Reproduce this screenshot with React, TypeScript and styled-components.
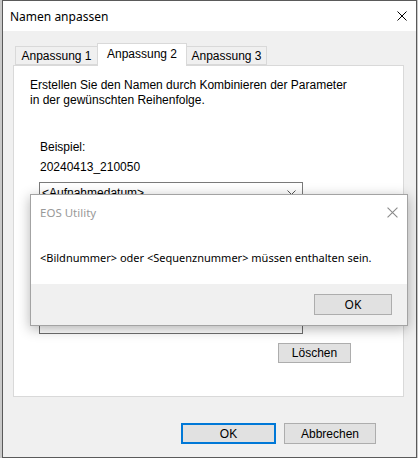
import React from "react";
import styled, { createGlobalStyle } from "styled-components";

const GlobalStyle = createGlobalStyle`
  html, body { margin: 0; padding: 0; }
  body {
    background: #c9c9c9;
    font-family: "Liberation Sans", Arial, sans-serif;
    font-size: 12px;
    color: #000;
    overflow: hidden;
  }
`;

const Page = styled.div`
  position: relative;
  width: 418px;
  height: 458px;
`;

const Window = styled.div`
  margin-left: 2px;
  width: 413px;
  height: 456px;
  border: 1px solid #5a5a5a;
  background: #f0f0f0;
  display: flex;
  flex-direction: column;
`;

const TitleBar = styled.div`
  height: 30px;
  background: #fff;
  display: flex;
  align-items: center;
  justify-content: space-between;
  padding: 0 9px 0 7px;
`;

const TitleText = styled.span`
  font-family: "Noto Sans", "Open Sans", sans-serif;
  font-size: 12px;
  color: #000;
`;

const Client = styled.div`
  display: flex;
  flex-direction: column;
  padding: 13px 12px 0 10px;
`;

const TabStrip = styled.div`
  height: 21px;
  display: flex;
  align-items: flex-end;
  padding-left: 2px;
  position: relative;
  z-index: 1;
`;

const Tab = styled.div<{ $active?: boolean; $w: number }>`
  box-sizing: border-box;
  width: ${(p) => p.$w}px;
  height: ${(p) => (p.$active ? 23 : 19)}px;
  margin: ${(p) => (p.$active ? "0 -1px -1px -1px" : "0")};
  border: 1px solid #d9d9d9;
  border-bottom: ${(p) => (p.$active ? "none" : "1px solid #d9d9d9")};
  background: ${(p) => (p.$active ? "#fff" : "#f0f0f0")};
  display: flex;
  align-items: ${(p) => (p.$active ? "flex-start" : "center")};
  justify-content: center;
  padding-top: ${(p) => (p.$active ? "3px" : "0")};
  font-size: 12px;
  position: relative;
  z-index: ${(p) => (p.$active ? 2 : 1)};
`;

const Panel = styled.div`
  box-sizing: border-box;
  height: 332px;
  background: #fff;
  border: 1px solid #d9d9d9;
  padding: 12px 0 0 0;
  display: flex;
  flex-direction: column;
`;

const Paragraph = styled.p`
  margin: 0 0 0 16px;
  line-height: 15px;
`;

const ExampleBlock = styled.div`
  margin: 32px 0 0 26px;
  display: flex;
  flex-direction: column;
  gap: 5px;
  line-height: 15px;
`;

const Select = styled.div`
  box-sizing: border-box;
  margin: 7px 0 0 25px;
  width: 264px;
  height: 21px;
  border: 1px solid #7a7a7a;
  display: flex;
  align-items: center;
  justify-content: space-between;
  padding: 0 6px 0 2px;
`;

const ListBox = styled.div`
  box-sizing: border-box;
  margin: 5px 0 0 25px;
  width: 264px;
  height: 126px;
  border: 1px solid #6e6e6e;
  background: #fff;
`;

const ButtonRow = styled.div<{ $left: number }>`
  display: flex;
  margin: 9px 0 0 ${(p) => p.$left}px;
`;

const Button = styled.button<{ $w: number; $h?: number; $default?: boolean }>`
  box-sizing: border-box;
  width: ${(p) => p.$w}px;
  height: ${(p) => p.$h ?? 21}px;
  background: #e1e1e1;
  border: ${(p) => (p.$default ? "2px solid #0078d7" : "1px solid #adadad")};
  font-family: "Liberation Sans", Arial, sans-serif;
  font-size: 12px;
  color: #000;
  padding: 0;
  display: flex;
  align-items: center;
  justify-content: center;
`;

const Footer = styled.div`
  display: flex;
  justify-content: flex-end;
  gap: 8px;
  margin-top: 26px;
  padding-right: 28px;
`;

const Dialog = styled.div`
  position: absolute;
  left: 30px;
  top: 194px;
  width: 378px;
  height: 132px;
  box-sizing: border-box;
  border: 1px solid #a3a3a3;
  background: #fff;
  box-shadow: 0 3px 12px rgba(0, 0, 0, 0.3);
  display: flex;
  flex-direction: column;
  font-family: "Noto Sans", "Open Sans", sans-serif;
`;

const DialogTitle = styled.div`
  height: 34px;
  display: flex;
  align-items: center;
  justify-content: space-between;
  padding: 0 9px 0 9px;
  color: #999;
  font-size: 11.5px;
`;

const DialogBody = styled.div`
  flex: 1;
  display: flex;
  align-items: center;
  padding: 2px 0 0 9px;
  font-size: 11px;
  color: #000;
`;

const DialogFooter = styled.div`
  height: 41px;
  background: #f0f0f0;
  display: flex;
  justify-content: flex-end;
  align-items: flex-start;
  padding: 10px 15px 0 0;
  box-sizing: border-box;
`;

const DialogButton = styled.button`
  box-sizing: border-box;
  width: 78px;
  height: 21px;
  background: #e1e1e1;
  border: 1px solid #adadad;
  font-family: "Noto Sans", "Open Sans", sans-serif;
  font-size: 12px;
  color: #000;
  padding: 0;
`;

const CloseIcon = ({ color, size }: { color: string; size: number }) => (
  <svg width={size} height={size} viewBox="0 0 10 10">
    <path d="M0.5 0.5 L9.5 9.5 M9.5 0.5 L0.5 9.5" stroke={color} strokeWidth="1" fill="none" />
  </svg>
);

const Chevron = () => (
  <svg width="9" height="6" viewBox="0 0 9 6">
    <path d="M0.5 0.5 L4.5 4.5 L8.5 0.5" stroke="#555" strokeWidth="1" fill="none" />
  </svg>
);

export default function App() {
  return (
    <Page>
      <GlobalStyle />
      <Window>
        <TitleBar>
          <TitleText>Namen anpassen</TitleText>
          <CloseIcon color="#000" size={10} />
        </TitleBar>
        <Client>
          <TabStrip>
            <Tab $w={83}>Anpassung 1</Tab>
            <Tab $w={90} $active>
              Anpassung 2
            </Tab>
            <Tab $w={81}>Anpassung 3</Tab>
          </TabStrip>
          <Panel>
            <Paragraph>
              Erstellen Sie den Namen durch Kombinieren der Parameter
              <br />
              in der gewünschten Reihenfolge.
            </Paragraph>
            <ExampleBlock>
              <span>Beispiel:</span>
              <span>20240413_210050</span>
            </ExampleBlock>
            <Select>
              <span>&lt;Aufnahmedatum&gt;</span>
              <Chevron />
            </Select>
            <ListBox />
            <ButtonRow $left={264}>
              <Button $w={73} $h={20}>Löschen</Button>
            </ButtonRow>
          </Panel>
          <Footer>
            <Button $w={95} $default>
              OK
            </Button>
            <Button $w={92}>Abbrechen</Button>
          </Footer>
        </Client>
      </Window>
      <Dialog>
        <DialogTitle>
          <span>EOS Utility</span>
          <CloseIcon color="#8a8a8a" size={11} />
        </DialogTitle>
        <DialogBody>&lt;Bildnummer&gt; oder &lt;Sequenznummer&gt; müssen enthalten sein.</DialogBody>
        <DialogFooter>
          <DialogButton>OK</DialogButton>
        </DialogFooter>
      </Dialog>
    </Page>
  );
}
